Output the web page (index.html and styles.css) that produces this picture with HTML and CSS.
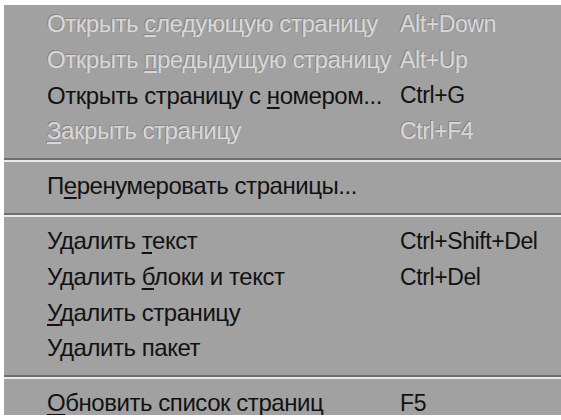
FILE: index.html
```html
<!DOCTYPE html>
<html lang="ru">
<head>
<meta charset="utf-8">
<link rel="stylesheet" href="styles.css">
</head>
<body>
<div class="menu">
  <div class="item disabled"><span class="label">Открыть <u>с</u>ледующую страницу</span><span class="accel">Alt+Down</span></div>
  <div class="item disabled"><span class="label">Открыть <u>п</u>редыдущую страницу</span><span class="accel">Alt+Up</span></div>
  <div class="item"><span class="label">Открыть страницу с <u>н</u>омером...</span><span class="accel">Ctrl+G</span></div>
  <div class="item disabled"><span class="label"><u>З</u>акрыть страницу</span><span class="accel">Ctrl+F4</span></div>
  <div class="sep"></div>
  <div class="item"><span class="label">П<u>е</u>ренумеровать страницы...</span><span class="accel"></span></div>
  <div class="sep"></div>
  <div class="item"><span class="label">Удалить <u>т</u>екст</span><span class="accel">Ctrl+Shift+Del</span></div>
  <div class="item"><span class="label">Удалить <u>б</u>локи и текст</span><span class="accel">Ctrl+Del</span></div>
  <div class="item"><span class="label"><u>У</u>далить страницу</span><span class="accel"></span></div>
  <div class="item"><span class="label">У<u>д</u>алить пакет</span><span class="accel"></span></div>
  <div class="sep"></div>
  <div class="item"><span class="label"><u>О</u>бновить список страниц</span><span class="accel">F5</span></div>
</div>
</body>
</html>
```
FILE: styles.css
```css
html, body {
  margin: 0;
  padding: 0;
  background: #ffffff;
}
body {
  padding: 5px 0 0 4px;
  height: 420px;
  box-sizing: border-box;
  overflow: hidden;
}
.menu {
  background: #a1a1a1;
  height: 410px;
  overflow: hidden;
  padding-top: 4px;
  box-sizing: border-box;
  font-family: "Liberation Sans", Arial, sans-serif;
  font-size: 24px;
  color: #121212;
}
.item {
  display: flex;
  align-items: center;
  height: 35.7px;
  box-sizing: border-box;
  padding-left: 43px;
  padding-bottom: 5px;
  white-space: nowrap;
}
.label {
  width: 353px;
  flex: none;
  letter-spacing: -0.45px;
}
.accel {
  flex: none;
  font-size: 23px;
  letter-spacing: -0.4px;
}
.item u {
  text-decoration-thickness: 2px;
  text-underline-offset: 3px;
}
.disabled {
  color: #d8d8d8;
  text-shadow: -1px -1px 0 #858585;
}
.sep {
  height: 19.3px;
  box-sizing: border-box;
  padding-top: 6px;
}
.sep::before {
  content: "";
  display: block;
  height: 2px;
  background: #6e6e6e;
  border-bottom: 2px solid #e8e8e8;
}
```
